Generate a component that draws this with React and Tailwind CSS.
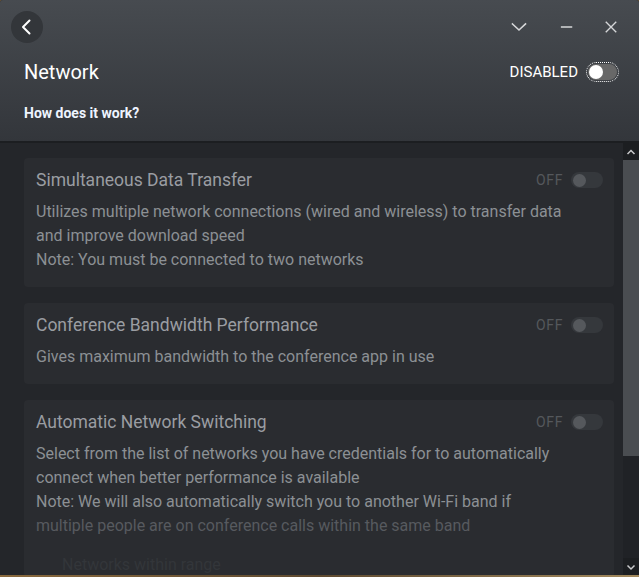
import React from "react";

const Chevron = ({ d, className }) => (
  <svg viewBox="0 0 16 16" className={className} fill="none" stroke="currentColor" strokeWidth="1.6" strokeLinecap="square">
    <path d={d} />
  </svg>
);

const Toggle = () => (
  <div className="w-[32px] h-[16px] rounded-full bg-[#35383c] flex items-center">
    <div className="w-[13px] h-[13px] rounded-full bg-[#55585c] ml-[2px]" />
  </div>
);

const CardHead = ({ title }) => (
  <div className="flex items-center justify-between h-[24px]">
    <span className="text-[17.5px] text-[#9a9da2]">{title}</span>
    <div className="flex items-center gap-2">
      <span className="text-[14px] text-[#55585c] tracking-[0.6px]">OFF</span>
      <Toggle />
    </div>
  </div>
);

const Card = ({ title, children }) => (
  <div className="bg-[#2a2c30] rounded-[4px] pl-3 pr-[11px] pt-[10px] pb-[15px] shrink-0">
    <CardHead title={title} />
    <div className="mt-2 text-[16px] leading-[24px] text-[#8c9094]">{children}</div>
  </div>
);

export default function App() {
  return (
    <div className="w-[639px] h-[577px] bg-[#6b5232] font-['Roboto',sans-serif] overflow-hidden">
      <div className="h-[575px] flex flex-col bg-[#24262a] rounded-t-[3px] overflow-hidden">
        <div className="h-[143px] shrink-0 bg-gradient-to-b from-[#474b50] to-[#33363b] border-b-2 border-[#1c1e21] flex flex-col">
          <div className="h-[54px] flex items-center pl-[11px] pr-[21px]">
            <div className="w-[32px] h-[32px] rounded-full bg-[#33363a] flex items-center justify-center">
              <svg viewBox="0 0 16 16" className="w-[16px] h-[16px] text-white" fill="none" stroke="currentColor" strokeWidth="2" strokeLinecap="round" strokeLinejoin="round">
                <path d="M10.5 1.5 4 8l6.5 6.5" />
              </svg>
            </div>
            <div className="ml-auto flex items-center text-[#d6d7d9]">
              <Chevron d="M1.5 5 8 11l6.5-6" className="w-[16px] h-[16px]" />
              <svg viewBox="0 0 16 16" className="w-[14px] h-[14px] ml-[33px]" stroke="currentColor" strokeWidth="1.8">
                <path d="M1 8h13" />
              </svg>
              <svg viewBox="0 0 16 16" className="w-[14px] h-[14px] ml-[30px]" stroke="currentColor" strokeWidth="1.6">
                <path d="M2 2l12 12M14 2 2 14" />
              </svg>
            </div>
          </div>
          <div className="h-[36px] flex items-center pl-6 pr-[20px]">
            <span className="text-[20px] text-white">Network</span>
            <div className="ml-auto flex items-center gap-2">
              <span className="text-[15px] text-white">DISABLED</span>
              <div className="w-[33px] h-[20px] rounded-full border border-dotted border-white p-[1px]">
                <div className="w-full h-full rounded-full bg-[#686868] flex items-center">
                  <div className="w-[14px] h-[14px] rounded-full bg-white ml-[1px]" />
                </div>
              </div>
            </div>
          </div>
          <div className="mt-[12px] pl-6 text-[14px] leading-[22px] font-bold text-[#eef4ff]">How does it work?</div>
        </div>

        <div className="flex-1 flex min-h-0">
          <div className="flex-1 flex flex-col gap-4 pl-6 pr-[9px] pt-[15px] overflow-hidden">
            <Card title="Simultaneous Data Transfer">
              <div>Utilizes multiple network connections (wired and wireless) to transfer data</div>
              <div>and improve download speed</div>
              <div>Note: You must be connected to two networks</div>
            </Card>
            <Card title="Conference Bandwidth Performance">
              <div>Gives maximum bandwidth to the conference app in use</div>
            </Card>
            <div className="bg-[#2a2c30] rounded-[4px] pl-3 pr-[11px] pt-[10px] shrink-0">
              <CardHead title="Automatic Network Switching" />
              <div className="mt-2 text-[16px] leading-[24px] text-[#8c9094]">
                <div>Select from the list of networks you have credentials for to automatically</div>
                <div>connect when better performance is available</div>
                <div>Note: We will also automatically switch you to another Wi-Fi band if</div>
                <div className="text-[#575a5f]">multiple people are on conference calls within the same band</div>
              </div>
              <div className="mt-[15px] pl-[26px] text-[16px] leading-[24px] text-[#33363a]">Networks within range</div>
            </div>
          </div>

          <div className="w-[16px] shrink-0 bg-[#202226] flex flex-col">
            <div className="h-[17px] bg-[#1c1e21] flex items-center justify-center text-[#c8c9cb]">
              <svg viewBox="0 0 10 10" className="w-[10px] h-[10px]" fill="none" stroke="currentColor" strokeWidth="1.5">
                <path d="M1.5 7 5 3.5 8.5 7" />
              </svg>
            </div>
            <div className="h-[296px] bg-[#4a4d51]" />
            <div className="flex-1" />
            <div className="h-[17px] bg-[#1c1e21] flex items-center justify-center text-[#c8c9cb]">
              <svg viewBox="0 0 10 10" className="w-[10px] h-[10px]" fill="none" stroke="currentColor" strokeWidth="1.5">
                <path d="M1.5 3.5 5 7 8.5 3.5" />
              </svg>
            </div>
          </div>
        </div>
      </div>
      <div className="h-[2px] bg-gradient-to-r from-[#8a6a3e] via-[#5e4a30] to-[#a38a5e]" />
    </div>
  );
}
